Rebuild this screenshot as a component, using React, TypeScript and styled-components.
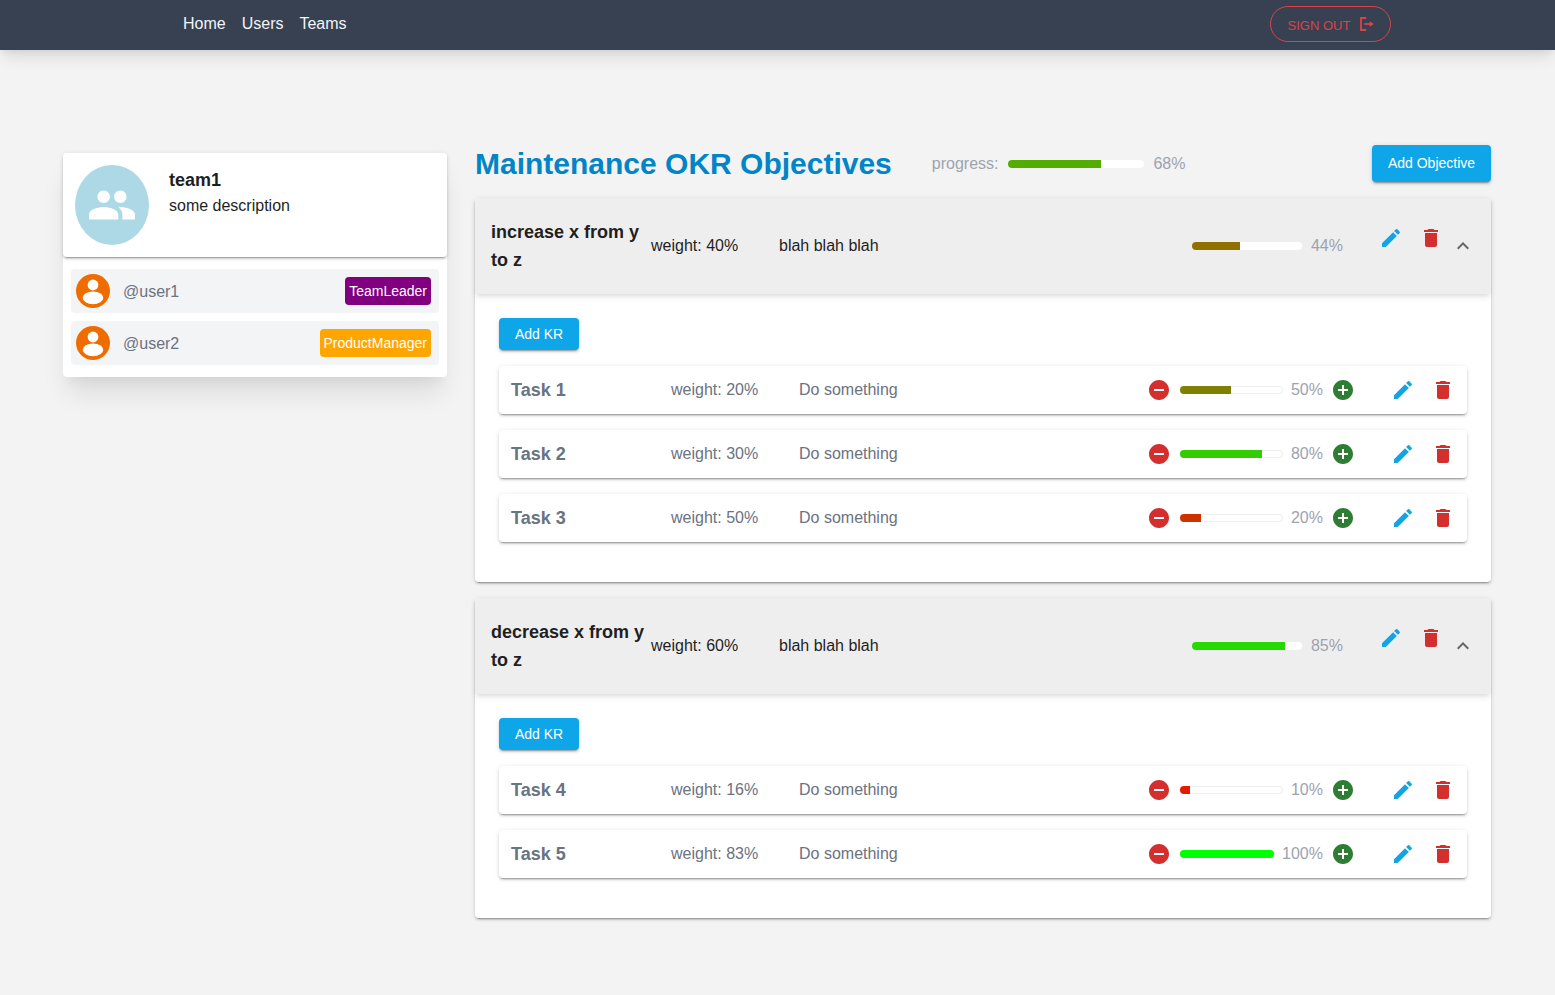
import React from "react";
import styled, { createGlobalStyle } from "styled-components";

type Task = { id: number; weight: number; progress: number };
type Objective = {
  title: string;
  weight: number;
  progress: number;
  tasks: Task[];
};

const objectives: Objective[] = [
  {
    title: "increase x from y to z",
    weight: 40,
    progress: 44,
    tasks: [
      { id: 1, weight: 20, progress: 50 },
      { id: 2, weight: 30, progress: 80 },
      { id: 3, weight: 50, progress: 20 },
    ],
  },
  {
    title: "decrease x from y to z",
    weight: 60,
    progress: 85,
    tasks: [
      { id: 4, weight: 16, progress: 10 },
      { id: 5, weight: 83, progress: 100 },
    ],
  },
];

const barColor = (p: number) =>
  `rgb(${Math.round(255 * (1 - p / 100))}, ${Math.round((255 * p) / 100)}, 0)`;

const Icon: React.FC<{ d: string; size: number; color: string }> = ({ d, size, color }) => (
  <svg width={size} height={size} viewBox="0 0 24 24" fill={color}>
    <path d={d} />
  </svg>
);

const EDIT =
  "M3 17.25V21h3.75L17.81 9.94l-3.75-3.75L3 17.25zM20.71 7.04c.39-.39.39-1.02 0-1.41l-2.34-2.34a.9959.9959 0 0 0-1.41 0l-1.83 1.83 3.75 3.75 1.83-1.83z";
const TRASH = "M6 19c0 1.1.9 2 2 2h8c1.1 0 2-.9 2-2V7H6v12zM19 4h-3.5l-1-1h-5l-1 1H5v2h14V4z";
const CHEVRON = "M12 8l-6 6 1.41 1.41L12 10.83l4.59 4.58L18 14z";
const MINUS = "M12 2C6.48 2 2 6.48 2 12s4.48 10 10 10 10-4.48 10-10S17.52 2 12 2zm5 11H7v-2h10v2z";
const PLUS =
  "M12 2C6.48 2 2 6.48 2 12s4.48 10 10 10 10-4.48 10-10S17.52 2 12 2zm5 11h-4v4h-2v-4H7v-2h4V7h2v4h4v2z";
const PEOPLE =
  "M16 11c1.66 0 2.99-1.34 2.99-3S17.66 5 16 5c-1.66 0-3 1.34-3 3s1.34 3 3 3zm-8 0c1.66 0 2.99-1.34 2.99-3S9.66 5 8 5C6.34 5 5 6.34 5 8s1.34 3 3 3zm0 2c-2.33 0-7 1.17-7 3.5V19h14v-2.5c0-2.33-4.67-3.5-7-3.5zm8 0c-.29 0-.62.02-.97.05 1.16.84 1.97 1.97 1.97 3.45V19h6v-2.5c0-2.33-4.67-3.5-7-3.5z";

const UserAvatar = () => (
  <svg width="34" height="34" viewBox="0 0 34 34">
    <circle cx="17" cy="17" r="17" fill="#ef6c00" />
    <circle cx="17" cy="11" r="5.4" fill="#fff" />
    <ellipse cx="17" cy="23.8" rx="10.3" ry="6.4" fill="#fff" />
  </svg>
);

const Progress: React.FC<{ value: number; bordered?: boolean }> = ({ value, bordered }) => (
  <Track $bordered={bordered}>
    <Fill style={{ width: `${value}%`, background: barColor(value) }} />
  </Track>
);

const App: React.FC = () => (
  <>
    <GlobalStyle />
    <Navbar>
      <NavLinks>
        <NavLink>Home</NavLink>
        <NavLink>Users</NavLink>
        <NavLink>Teams</NavLink>
      </NavLinks>
      <SignOut>
        <SignOutLabel>SIGN OUT</SignOutLabel>
        <svg width="14" height="14" viewBox="0 0 14 14" fill="none" stroke="#f04448" strokeWidth="1.8">
          <path d="M6.2 1H1v12h5.2" />
          <path d="M4.5 7h5.5" />
          <path d="M9.6 4.2 13.8 7l-4.2 2.8z" fill="#f04448" stroke="none" />
        </svg>
      </SignOut>
    </Navbar>
    <Page>
      <Sidebar>
        <TeamCard>
          <TeamAvatar>
            <Icon d={PEOPLE} size={50} color="#fff" />
          </TeamAvatar>
          <TeamInfo>
            <TeamName>team1</TeamName>
            <TeamDescription>some description</TeamDescription>
          </TeamInfo>
        </TeamCard>
        <MemberList>
          <Member>
            <UserAvatar />
            <MemberName>@user1</MemberName>
            <RoleBadge $color="#800080">TeamLeader</RoleBadge>
          </Member>
          <Member>
            <UserAvatar />
            <MemberName>@user2</MemberName>
            <RoleBadge $color="#ffa500">ProductManager</RoleBadge>
          </Member>
        </MemberList>
      </Sidebar>
      <Main>
        <TitleRow>
          <Title>Maintenance OKR Objectives</Title>
          <OverallLabel>progress:</OverallLabel>
          <OverallProgress>
            <Progress value={68} />
            <Percent>68%</Percent>
          </OverallProgress>
          <PrimaryButton $wide>Add Objective</PrimaryButton>
        </TitleRow>
        {objectives.map((objective) => (
          <ObjectiveCard key={objective.title}>
            <ObjectiveHeader>
              <ObjectiveTitle>{objective.title}</ObjectiveTitle>
              <ObjectiveWeight>weight: {objective.weight}%</ObjectiveWeight>
              <span>blah blah blah</span>
              <ObjectiveProgress>
                <Progress value={objective.progress} />
                <Percent>{objective.progress}%</Percent>
              </ObjectiveProgress>
              <ObjectiveActions>
                <Icon d={EDIT} size={24} color="#0ea5e9" />
                <Icon d={TRASH} size={24} color="#d32f2f" />
              </ObjectiveActions>
              <Chevron>
                <Icon d={CHEVRON} size={24} color="#666" />
              </Chevron>
            </ObjectiveHeader>
            <ObjectiveBody>
              <PrimaryButton>Add KR</PrimaryButton>
              {objective.tasks.map((task) => (
                <TaskRow key={task.id}>
                  <TaskName>Task {task.id}</TaskName>
                  <TaskWeight>weight: {task.weight}%</TaskWeight>
                  <span>Do something</span>
                  <TaskControls>
                    <Icon d={MINUS} size={24} color="#d32f2f" />
                    <TaskProgress>
                      <Progress value={task.progress} bordered />
                      <Percent>{task.progress}%</Percent>
                    </TaskProgress>
                    <Icon d={PLUS} size={24} color="#2e7d32" />
                  </TaskControls>
                  <TaskActions>
                    <Icon d={EDIT} size={24} color="#0ea5e9" />
                    <Icon d={TRASH} size={24} color="#d32f2f" />
                  </TaskActions>
                </TaskRow>
              ))}
            </ObjectiveBody>
          </ObjectiveCard>
        ))}
      </Main>
    </Page>
  </>
);

export default App;

const elevation2 =
  "0 3px 1px -2px rgba(0, 0, 0, 0.2), 0 2px 2px 0 rgba(0, 0, 0, 0.14), 0 1px 5px 0 rgba(0, 0, 0, 0.12)";

const GlobalStyle = createGlobalStyle`
  * { box-sizing: border-box; }
  html, body { margin: 0; }
  body {
    min-height: 995px;
    background: #f3f3f3;
    color: #1f1f1f;
    font-family: "Liberation Sans", Arial, sans-serif;
    font-size: 16px;
  }
`;

const Navbar = styled.header`
  height: 50px;
  background: #374151;
  display: flex;
  align-items: center;
  padding: 0 164px 0 183px;
  box-shadow: 0 10px 15px -3px rgba(0, 0, 0, 0.1), 0 4px 6px -2px rgba(0, 0, 0, 0.05);
`;

const NavLinks = styled.nav`
  display: flex;
  gap: 16px;
  margin-top: -2px;
`;

const NavLink = styled.a`
  color: #f3f4f6;
  font-size: 16px;
  line-height: 24px;
`;

const SignOut = styled.button`
  margin-left: auto;
  margin-top: -2px;
  width: 121px;
  height: 36px;
  border: 1px solid #f04448;
  border-radius: 18px;
  background: transparent;
  color: #f04448;
  opacity: 0.88;
  font-family: "Liberation Sans", sans-serif;
  font-size: 13px;
  display: flex;
  align-items: center;
  justify-content: center;
  gap: 10px;
  padding: 0 0 0 1px;
`;

const SignOutLabel = styled.span`
  padding-top: 2px;
`;

const Page = styled.div`
  display: flex;
  align-items: flex-start;
  gap: 28px;
  padding: 95px 64px 0 63px;
`;

const Sidebar = styled.aside`
  flex: 0 0 384px;
  margin-top: 8px;
  background: #fff;
  border-radius: 4px;
  box-shadow: 0 20px 25px -5px rgba(0, 0, 0, 0.1), 0 10px 10px -5px rgba(0, 0, 0, 0.04);
`;

const TeamCard = styled.div`
  height: 104px;
  display: flex;
  padding: 12px;
  gap: 20px;
  background: #fff;
  border-radius: 4px;
  box-shadow: ${elevation2};
`;

const TeamAvatar = styled.div`
  width: 74px;
  height: 80px;
  border-radius: 50%;
  background: #add8e6;
  display: flex;
  align-items: center;
  justify-content: center;
`;

const TeamInfo = styled.div`
  padding-top: 4px;
`;

const TeamName = styled.div`
  font-size: 18px;
  font-weight: 700;
  line-height: 22px;
`;

const TeamDescription = styled.div`
  font-size: 16px;
  line-height: 22px;
  margin-top: 4px;
`;

const MemberList = styled.div`
  display: flex;
  flex-direction: column;
  gap: 8px;
  padding: 12px 8px;
`;

const Member = styled.div`
  height: 44px;
  display: flex;
  align-items: center;
  padding: 0 8px 0 5px;
  background: #f3f4f6;
  border-radius: 4px;
`;

const MemberName = styled.span`
  margin-left: 13px;
  padding-top: 2px;
  color: #6b7280;
`;

const RoleBadge = styled.span<{ $color: string }>`
  margin-left: auto;
  height: 28px;
  display: flex;
  align-items: center;
  padding: 0 4px 0 3.75px;
  border-radius: 4px;
  background: ${(p) => p.$color};
  color: #fff;
  font-size: 14px;
`;

const Main = styled.main`
  flex: 1;
  display: flex;
  flex-direction: column;
  gap: 16px;
`;

const TitleRow = styled.div`
  display: flex;
  align-items: center;
  height: 37px;
`;

const Title = styled.h1`
  margin: 0 40px 0 0;
  color: #0284c7;
  font-size: 30px;
  line-height: 36px;
  font-weight: 700;
`;

const OverallLabel = styled.span`
  color: #9ca3af;
  margin-right: 9px;
`;

const Track = styled.div<{ $bordered?: boolean }>`
  flex: 1;
  height: 8px;
  border-radius: 4px;
  overflow: hidden;
  background: #fff;
  ${(p) => p.$bordered && "box-shadow: inset 0 0 0 1px #eee;"}
`;

const Fill = styled.div`
  height: 100%;
`;

const Percent = styled.span`
  color: #9ca3af;
  white-space: nowrap;
`;

const OverallProgress = styled.div`
  width: 178px;
  display: flex;
  align-items: center;
  gap: 9px;
`;

const PrimaryButton = styled.button<{ $wide?: boolean }>`
  align-self: flex-start;
  flex: none;
  width: ${(p) => (p.$wide ? "119px" : "80px")};
  height: ${(p) => (p.$wide ? "37px" : "32px")};
  margin-left: ${(p) => (p.$wide ? "auto" : "0")};
  border: 0;
  border-radius: 4px;
  padding: 0 0 ${(p) => (p.$wide ? "2px" : "0")};
  background: #0ea5e9;
  color: #fff;
  font-family: "Liberation Sans", sans-serif;
  font-size: 14px;
  box-shadow: ${elevation2};
`;

const ObjectiveCard = styled.section`
  background: #fff;
  border-radius: 4px;
  box-shadow: ${elevation2};
`;

const ObjectiveHeader = styled.div`
  height: 96px;
  display: flex;
  align-items: center;
  padding: 0 16px;
  background: #eee;
  border-radius: 4px 4px 0 0;
  box-shadow: 0 4px 6px -1px rgba(0, 0, 0, 0.1), 0 2px 4px -1px rgba(0, 0, 0, 0.06);
`;

const ObjectiveTitle = styled.div`
  flex: 0 0 160px;
  font-size: 18px;
  font-weight: 700;
  line-height: 28px;
`;

const ObjectiveWeight = styled.span`
  flex: 0 0 128px;
`;

const ObjectiveProgress = styled.div`
  width: 151px;
  margin-left: auto;
  display: flex;
  align-items: center;
  gap: 9px;
`;

const ObjectiveActions = styled.div`
  display: flex;
  gap: 16px;
  margin: -16px 0 0 36px;
`;

const Chevron = styled.div`
  display: flex;
  margin-left: 8px;
`;

const ObjectiveBody = styled.div`
  display: flex;
  flex-direction: column;
  gap: 16px;
  padding: 24px 24px 40px;
`;

const TaskRow = styled.div`
  height: 48px;
  display: flex;
  align-items: center;
  padding: 0 12px;
  background: #fff;
  border-radius: 4px;
  color: #6b7280;
  box-shadow: ${elevation2};
`;

const TaskName = styled.div`
  flex: 0 0 160px;
  font-size: 18px;
  font-weight: 700;
`;

const TaskWeight = styled.span`
  flex: 0 0 128px;
`;

const TaskControls = styled.div`
  margin-left: auto;
  display: flex;
  align-items: center;
  gap: 8px;
`;

const TaskProgress = styled.div`
  width: 143px;
  margin-left: 1px;
  display: flex;
  align-items: center;
  gap: 8px;
`;

const TaskActions = styled.div`
  display: flex;
  gap: 16px;
  margin-left: 36px;
`;
